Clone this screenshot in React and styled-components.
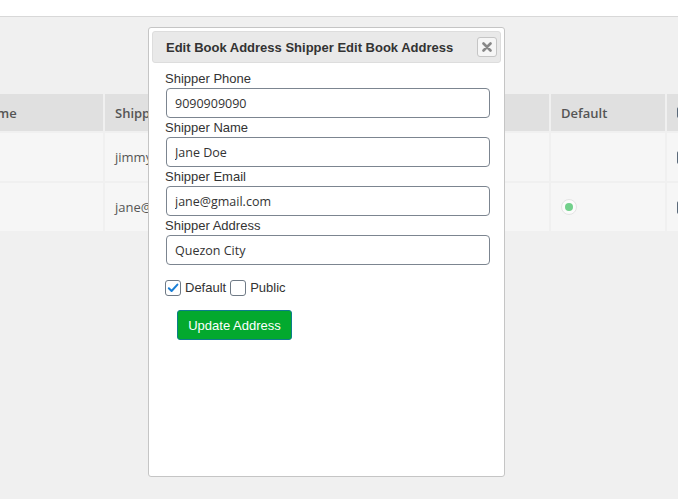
import React from "react";
import styled, { createGlobalStyle } from "styled-components";

const Global = createGlobalStyle`
  html, body { margin: 0; padding: 0; }
  body {
    width: 678px;
    height: 499px;
    overflow: hidden;
    background: #f0f0f0;
    font-family: "Liberation Sans", Arial, sans-serif;
  }
`;

const Page = styled.div`
  position: relative;
  width: 678px;
  height: 499px;
  overflow: hidden;
  background: #f0f0f0;
`;

const TopBar = styled.div`
  height: 16px;
  background: #ffffff;
  border-bottom: 1px solid #d8d8d8;
`;

const Table = styled.div`
  display: grid;
  grid-template-columns: 134px 225px 217px 114px 100px;
  grid-auto-rows: 48px;
  grid-template-rows: 37px;
  gap: 2px;
  margin: 77px 0 0 -31px;
  width: max-content;
  font-family: "Open Sans", sans-serif;
  font-size: 13px;
  color: #555;
`;

const Th = styled.div`
  background: #e0e0e0;
  font-weight: 600;
  display: flex;
  align-items: center;
  padding: 0 10px;
  white-space: nowrap;
  overflow: hidden;
`;

const Td = styled.div`
  background: #f6f6f6;
  display: flex;
  align-items: center;
  padding: 0 10px;
  white-space: nowrap;
  overflow: hidden;
`;

const Dot = styled.span`
  width: 14px;
  height: 14px;
  border-radius: 50%;
  border: 1px solid #e4e4e4;
  background: #fbfbfb;
  display: flex;
  align-items: center;
  justify-content: center;
  &::after {
    content: "";
    width: 8px;
    height: 8px;
    border-radius: 50%;
    background: #72d08b;
  }
`;

const ActionBtn = styled.span`
  display: inline-block;
  width: 40px;
  height: ${(p) => (p.$small ? 11 : 13)}px;
  background: #5b6a7a;
  border-radius: 2px;
`;

const Dialog = styled.div`
  position: absolute;
  left: 148px;
  top: 27px;
  width: 357px;
  height: 450px;
  box-sizing: border-box;
  background: #ffffff;
  border: 1px solid #c5c5c5;
  border-radius: 3px;
  padding: 3px;
  display: flex;
  flex-direction: column;
`;

const TitleBar = styled.div`
  height: 32px;
  box-sizing: border-box;
  background: #e9e9e9;
  border: 1px solid #dddddd;
  border-radius: 3px;
  display: flex;
  align-items: center;
  justify-content: space-between;
  padding: 0 3px 0 13px;
`;

const Title = styled.span`
  font-size: 13px;
  font-weight: bold;
  color: #333333;
`;

const CloseBtn = styled.button`
  width: 20px;
  height: 20px;
  padding: 0;
  box-sizing: border-box;
  border: 1px solid #c5c5c5;
  border-radius: 3px;
  background: #f6f6f6;
  display: flex;
  align-items: center;
  justify-content: center;
`;

const Content = styled.div`
  padding: 8px 13px 0 13px;
  display: flex;
  flex-direction: column;
`;

const Field = styled.div`
  display: flex;
  flex-direction: column;
  margin-bottom: 2px;
`;

const Label = styled.label`
  font-size: 13px;
  line-height: 16px;
  color: #333333;
`;

const Input = styled.input`
  margin: 1px 0 0 1px;
  width: 324px;
  height: 30px;
  box-sizing: border-box;
  border: 1px solid #7c8590;
  border-radius: 4px;
  padding: 0 8px;
  font-family: "Open Sans", sans-serif;
  font-size: 12.5px;
  color: #333;
  background: #fff;
  outline: none;
`;

const CheckRow = styled.div`
  display: flex;
  align-items: center;
  margin-top: 12px;
  font-size: 13px;
  color: #333;
`;

const Box = styled.span`
  width: 16px;
  height: 16px;
  box-sizing: border-box;
  border: 1px solid #6f7a86;
  border-radius: 3px;
  background: #fff;
  display: flex;
  align-items: center;
  justify-content: center;
  margin-right: 4px;
`;

const CheckLabel = styled.span`
  margin-right: 4px;
  line-height: 18px;
`;

const SubmitBtn = styled.button`
  align-self: flex-start;
  margin: 13px 0 0 12px;
  width: 115px;
  height: 30px;
  box-sizing: border-box;
  background: #03a92e;
  border: 1px solid #0c7d8c;
  border-radius: 3px;
  color: #ffffff;
  font-family: "Liberation Sans", Arial, sans-serif;
  font-size: 13px;
  padding: 0;
`;

const fields = [
  ["Shipper Phone", "9090909090"],
  ["Shipper Name", "Jane Doe"],
  ["Shipper Email", "jane@gmail.com"],
  ["Shipper Address", "Quezon City"],
];

export default function App() {
  return (
    <Page>
      <Global />
      <TopBar />
      <Table>
        <Th>Name</Th>
        <Th>Shipper Email</Th>
        <Th>Shipper Address</Th>
        <Th>Default</Th>
        <Th><ActionBtn $small /></Th>

        <Td></Td>
        <Td>jimmy@gmail.com</Td>
        <Td>Makati City</Td>
        <Td></Td>
        <Td><ActionBtn /></Td>

        <Td></Td>
        <Td>jane@gmail.com</Td>
        <Td>Quezon City</Td>
        <Td><Dot /></Td>
        <Td><ActionBtn /></Td>
      </Table>

      <Dialog>
        <TitleBar>
          <Title>Edit Book Address Shipper Edit Book Address</Title>
          <CloseBtn aria-label="close">
            <svg width="10" height="10" viewBox="0 0 10 10">
              <path d="M1.5 1.5 L8.5 8.5 M8.5 1.5 L1.5 8.5" stroke="#888" strokeWidth="2.6" strokeLinecap="round" />
            </svg>
          </CloseBtn>
        </TitleBar>
        <Content>
          {fields.map(([label, value]) => (
            <Field key={label}>
              <Label>{label}</Label>
              <Input defaultValue={value} />
            </Field>
          ))}
          <CheckRow>
            <Box>
              <svg width="12" height="12" viewBox="0 0 12 12">
                <path d="M1.8 6.2 L4.6 9 L10.4 2.6" fill="none" stroke="#1a7fd6" strokeWidth="2" strokeLinecap="round" strokeLinejoin="round" />
              </svg>
            </Box>
            <CheckLabel>Default</CheckLabel>
            <Box />
            <CheckLabel>Public</CheckLabel>
          </CheckRow>
          <SubmitBtn>Update Address</SubmitBtn>
        </Content>
      </Dialog>
    </Page>
  );
}
